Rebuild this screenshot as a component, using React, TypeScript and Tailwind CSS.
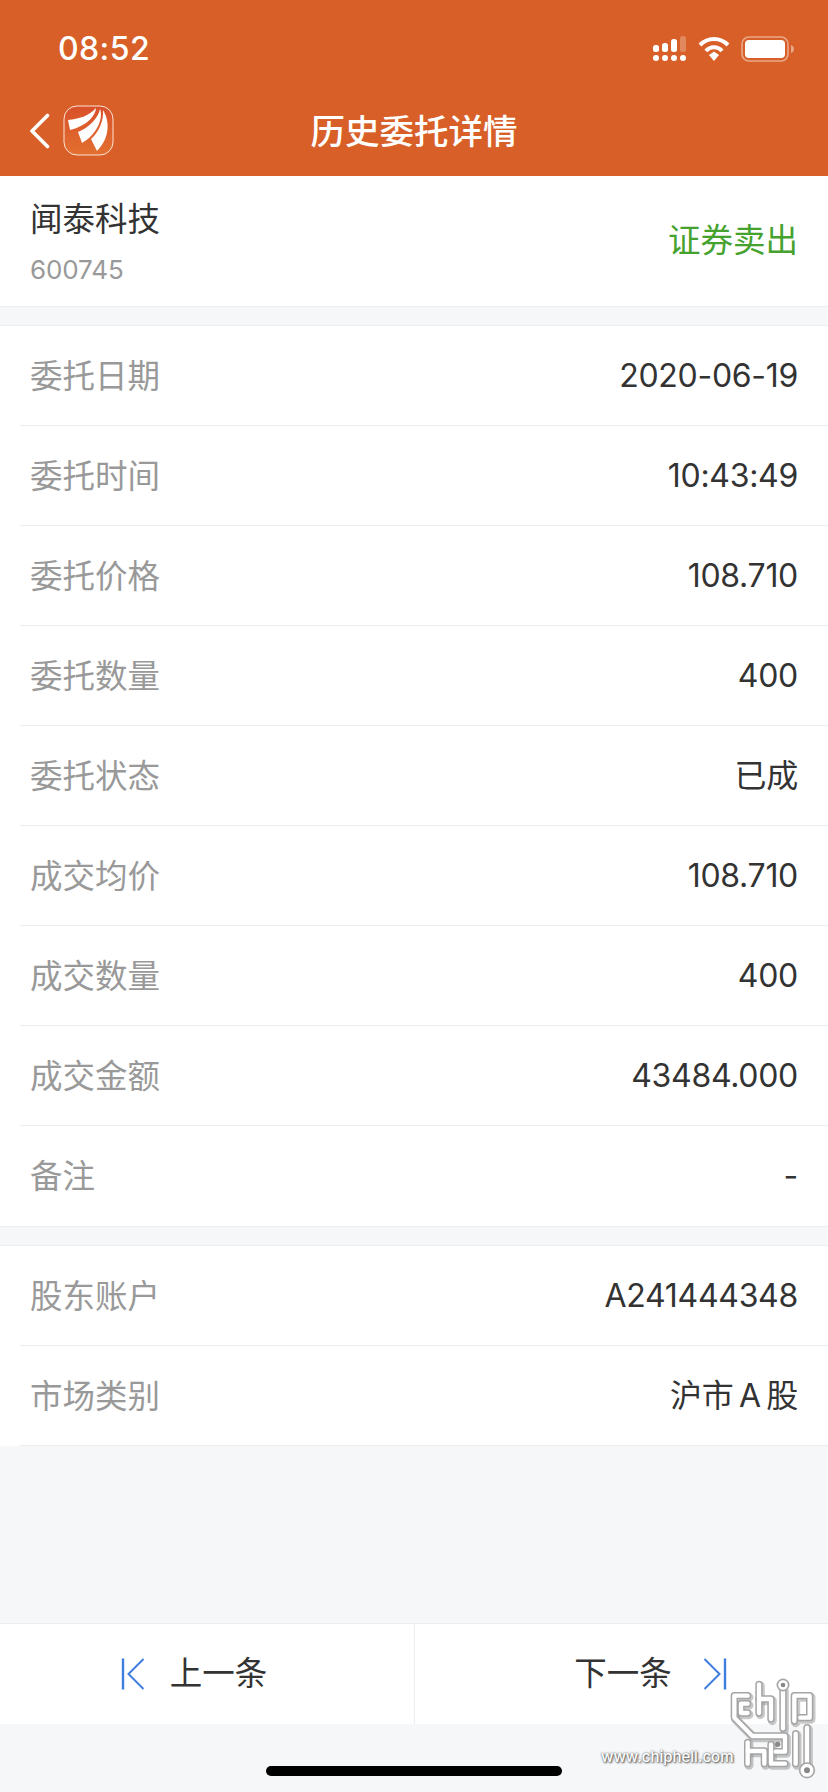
const LATIN = "font-['Inter','Noto_Sans_CJK_SC',sans-serif]";

function Row({ label, value, last }: { label: string; value: string; last?: boolean }) {
  return (
    <div className="pl-[20px] h-[100px]">
      <div className={`h-full flex items-center justify-between pr-[30px] pl-[10px] ${last ? "" : "border-b border-[#ebedef]"}`}>
        <span className="text-[32.5px] pt-[3px] text-[#999999]">{label}</span>
        <span className="text-[32px] text-[#333333] tracking-[-0.3px]">{value}</span>
      </div>
    </div>
  );
}

function Logo() {
  return (
    <svg width="51" height="51" viewBox="0 0 51 51" className="ml-[13px]">
      <defs>
        <linearGradient id="lg" x1="0" y1="0" x2="0" y2="1">
          <stop offset="0" stopColor="#D9502A" />
          <stop offset="1" stopColor="#E2702F" />
        </linearGradient>
      </defs>
      <rect x="1" y="1" width="49" height="49" rx="13" fill="url(#lg)" stroke="#fbe3d4" strokeWidth="1" />
      <path d="M5 15 C16 14 26 11 33 3 C33 10 24 21 7 25 Z" fill="#fff" />
      <path d="M15 27 C25 23 35 14 37 4 C41 15 32 31 19 38 Z" fill="#fff" />
      <path d="M28 34 C36 27 41 15 40 5 C47 16 47 33 34 46 Z" fill="#fff" />
    </svg>
  );
}

function Watermark() {
  const paths = [
    "M172 226 H132 V292 L186 347 H284 V394 H256",
    "M172 250 H152 V278 H172",
    "M206 192 V278",
    "M206 236 H242 V296",
    "M278 208 V324",
    "M312 302 V226 H358 V292 H330",
    "M172 366 V430",
    "M172 392 H222 V430",
    "M242 372 V430 H284",
    "M316 340 V430",
    "M350 322 V436",
  ];
  return (
    <svg width="96" height="112" viewBox="110 170 288 336" className="absolute left-[727px] top-[1677px]">
      <g fill="none" strokeLinejoin="round" strokeLinecap="round">
        <g transform="translate(4 5)" stroke="#777777" strokeOpacity="0.4" strokeWidth="27">
          {paths.map((d) => <path key={d} d={d} />)}
        </g>
        <g stroke="#a5a5a5" strokeWidth="22">
          {paths.map((d) => <path key={d} d={d} />)}
        </g>
        <g stroke="#ffffff" strokeWidth="13">
          {paths.map((d) => <path key={d} d={d} />)}
        </g>
      </g>
      <circle cx="278" cy="194" r="17" fill="#fff" stroke="#a5a5a5" strokeWidth="5" />
      <circle cx="278" cy="194" r="7" fill="#888" />
      <circle cx="262" cy="372" r="8" fill="#888" />
      <circle cx="350" cy="450" r="22" fill="#fff" stroke="#a5a5a5" strokeWidth="5" />
      <circle cx="350" cy="450" r="9" fill="#888" />
    </svg>
  );
}

export default function App() {
  const rows1 = [
    ["委托日期", "2020-06-19"],
    ["委托时间", "10:43:49"],
    ["委托价格", "108.710"],
    ["委托数量", "400"],
    ["委托状态", "已成"],
    ["成交均价", "108.710"],
    ["成交数量", "400"],
    ["成交金额", "43484.000"],
    ["备注", "-"],
  ];
  const rows2 = [
    ["股东账户", "A241444348"],
    ["市场类别", "沪市\u2009A\u2009股"],
  ];
  return (
    <div className={`relative w-[828px] h-[1792px] overflow-hidden bg-[#f6f7f9] flex flex-col ${LATIN}`}>
      <header className="bg-[#d86028] h-[176px] shrink-0 flex flex-col">
        <div className="h-[88px] flex items-center justify-between pl-[58px] pr-[33px] pt-[10px]">
          <span className="text-[32px] font-medium tracking-[0.4px] text-white">08:52</span>
          <div className="flex items-center gap-[11px]">
            <svg width="34" height="26" viewBox="0 0 34 26">
              <g fill="#fff">
                <rect x="0" y="9" width="6" height="7" rx="2.5" />
                <rect x="9" y="7" width="6" height="9" rx="2.5" />
                <rect x="18" y="3" width="6" height="13" rx="2.5" />
                <rect x="27" y="0" width="6" height="16" rx="2.5" fill="#ffffff" fillOpacity="0.25" />
                <circle cx="3" cy="22" r="3" />
                <circle cx="12" cy="22" r="3" />
                <circle cx="21" cy="22" r="3" />
                <circle cx="30" cy="22" r="3" />
              </g>
            </svg>
            <svg width="32" height="24" viewBox="0 0 32 24">
              <g fill="none" stroke="#fff" strokeWidth="4">
                <path d="M2 8 C10 0 22 0 30 8" />
                <path d="M8 14 C12 9 20 9 24 14" />
              </g>
              <path d="M11 18 L16 14.5 L21 18 L16 24 Z" fill="#fff" />
            </svg>
            <svg width="54" height="26" viewBox="0 0 54 26">
              <rect x="1" y="1" width="46" height="24" rx="7" fill="none" stroke="#ffffff" strokeOpacity="0.45" strokeWidth="1.6" />
              <rect x="4" y="4" width="40" height="18" rx="4" fill="#fff" />
              <path d="M50 9 C52 10 53 11 53 13 C53 15 52 16 50 17 Z" fill="#ffffff" fillOpacity="0.45" />
            </svg>
          </div>
        </div>
        <div className="relative flex-1 flex items-center justify-center">
          <div className="absolute left-[29px] top-[17px] flex items-center">
            <svg width="21" height="36" viewBox="0 0 21 36" fill="none">
              <path d="M18.5 2.5 L3 18 L18.5 33.5" stroke="#fff" strokeWidth="3.6" strokeLinecap="round" strokeLinejoin="round" />
            </svg>
            <Logo />
          </div>
          <span className="text-[34.5px] text-white font-medium">历史委托详情</span>
        </div>
      </header>

      <section className="h-[131px] shrink-0 bg-white border-b border-[#ebedef] flex items-center justify-between px-[30px]">
        <div className="flex flex-col pt-[3px]">
          <span className="text-[32.5px] leading-[44px] text-[#333333]">闻泰科技</span>
          <span className="text-[26px] leading-[36px] mt-[10px] tracking-[-0.1px] text-[#999999]">600745</span>
        </div>
        <span className="text-[32.5px] text-[#46a22e]">证券卖出</span>
      </section>

      <section className="mt-[18px] shrink-0 bg-white border-y border-[#ebedef]">
        {rows1.map(([l, v], i) => (
          <Row key={l} label={l} value={v} last={i === rows1.length - 1} />
        ))}
      </section>

      <section className="mt-[18px] shrink-0 bg-white border-t border-[#ebedef]">
        {rows2.map(([l, v]) => (
          <Row key={l} label={l} value={v} />
        ))}
      </section>

      <nav className="mt-auto mb-[68px] h-[101px] shrink-0 bg-white border-t border-[#ebedef] flex text-[32.5px] text-[#333333]">
        <div className="w-[415px] border-r border-[#ebedef] flex items-center justify-center gap-[25px] pr-[26px]">
          <svg width="24" height="32" viewBox="0 0 24 32" fill="none" stroke="#3f7ee0" strokeWidth="2">
            <path d="M2 0.5 V31.5" strokeWidth="2.4" />
            <path d="M22.5 1 L7.5 16 L22.5 31" />
          </svg>
          <span>上一条</span>
        </div>
        <div className="flex-1 flex items-center justify-center gap-[31px] pl-[58px]">
          <span>下一条</span>
          <svg width="24" height="32" viewBox="0 0 24 32" fill="none" stroke="#3f7ee0" strokeWidth="2">
            <path d="M22 0.5 V31.5" strokeWidth="2.4" />
            <path d="M1.5 1 L16.5 16 L1.5 31" />
          </svg>
        </div>
      </nav>

      <div className="absolute left-[266px] top-[1766px] w-[296px] h-[10px] rounded-full bg-black" />
      <span className="absolute left-[601px] top-[1745px] text-[15px] font-medium leading-[24px] text-white [text-shadow:0_0_2px_#555,1px_1px_2px_#555]">www.chiphell.com</span>
      <Watermark />
    </div>
  );
}
